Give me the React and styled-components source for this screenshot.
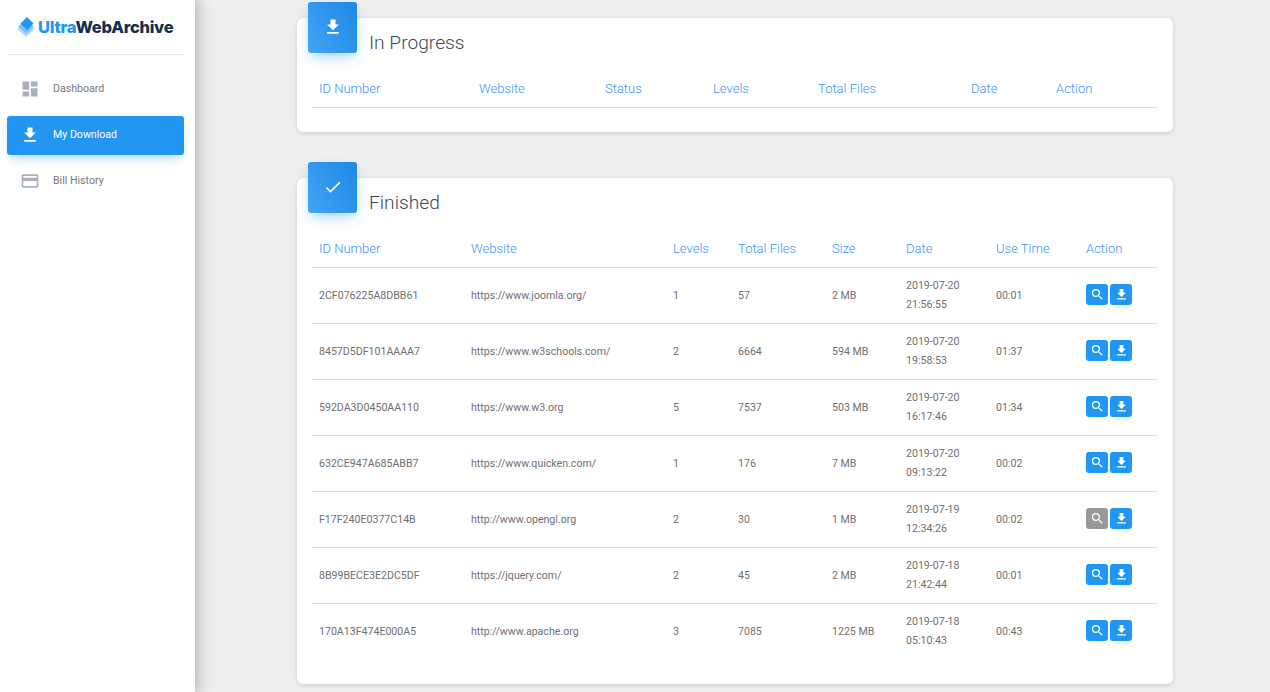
import React from 'react';
import styled, { createGlobalStyle } from 'styled-components';
import { MdDashboard, MdFileDownload, MdCreditCard, MdCheck, MdSearch } from 'react-icons/md';

const GlobalStyle = createGlobalStyle`
  html, body {
    margin: 0;
    height: 100%;
    overflow: hidden;
    background: #eeeeee;
    font-family: Roboto, "Liberation Sans", sans-serif;
  }
`;

const Page = styled.div`
  display: flex;
  height: 692px;
  overflow: hidden;
`;

const Sidebar = styled.aside`
  flex: 0 0 195px;
  height: 100%;
  background: #fff;
  box-shadow: 0 0 14px 2px rgba(0, 0, 0, 0.28);
  padding: 0 11px 0 7px;
  box-sizing: border-box;
  z-index: 2;
`;

const Brand = styled.div`
  display: flex;
  align-items: center;
  gap: 3px;
  height: 54px;
  padding: 0 0 0 10px;
  border-bottom: 1px solid #e8e8e8;
`;

const BrandText = styled.span`
  font-family: Inter, "Liberation Sans", sans-serif;
  font-weight: 800;
  font-size: 16.5px;
  letter-spacing: -0.25px;
  color: #10304f;
  white-space: nowrap;
`;

const BrandAccent = styled.span`
  color: #2196f3;
`;

const Nav = styled.nav`
  display: flex;
  flex-direction: column;
  gap: 7px;
  margin-top: 15px;
`;

const NavItem = styled.a`
  display: flex;
  align-items: center;
  height: 39px;
  padding: 0 0 2px 13px;
  box-sizing: border-box;
  gap: 13px;
  border-radius: 3px;
  font-size: 10.6px;
  font-weight: 400;
  color: ${(p) => (p.$active ? '#fff' : '#777')};
  background: ${(p) => (p.$active ? '#2196f3' : 'transparent')};
  box-shadow: ${(p) => (p.$active ? '0 6px 12px -4px rgba(33, 150, 243, 0.45)' : 'none')};

  svg {
    width: 20px;
    height: 20px;
    color: ${(p) => (p.$active ? '#fff' : '#a9afbb')};
    flex: none;
  }
`;

const Main = styled.main`
  flex: 1;
  padding: 18px 97px 0 102px;
  display: flex;
  flex-direction: column;
  gap: 46px;
  min-width: 0;
`;

const Card = styled.section`
  background: #fff;
  border-radius: 6px;
  box-shadow: 0 1px 4px rgba(0, 0, 0, 0.14);
  padding: 0 16px 0 15px;
  height: ${(p) => p.$height}px;
  box-sizing: border-box;
`;

const CardHeader = styled.header`
  display: flex;
  height: 48px;
`;

const IconBox = styled.div`
  width: 49px;
  height: 51px;
  padding-bottom: 2px;
  box-sizing: border-box;
  margin: -16px 0 0 -4px;
  border-radius: 3px;
  background: linear-gradient(60deg, #42a5f5, #1e88e5);
  box-shadow: 0 6px 14px -3px rgba(33, 150, 243, 0.45);
  display: flex;
  align-items: center;
  justify-content: center;
  color: #fff;
  flex: none;

  svg {
    width: 20px;
    height: 20px;
  }
`;

const CardTitle = styled.h2`
  margin: 13px 0 0 12px;
  font-size: 19.2px;
  line-height: 24px;
  font-weight: 300;
  color: #3c4858;
`;

const Table = styled.table`
  width: 845px;
  table-layout: fixed;
  border-collapse: collapse;
`;

const HeadCell = styled.th`
  height: 41px;
  padding: 4px 0 0 7px;
  text-align: left;
  font-size: 13px;
  font-weight: 300;
  color: #3a94f4;
  border-bottom: 1px solid #ddd;
  box-sizing: border-box;
`;

const Row = styled.tr`
  border-bottom: 1px solid #ddd;

  &:last-child {
    border-bottom: none;
  }
`;

const Cell = styled.td`
  height: 56px;
  padding: 0 0 0 7px;
  font-size: 10.6px;
  font-weight: 400;
  line-height: 19px;
  color: #6f6f6f;
  box-sizing: border-box;
`;

const Actions = styled.div`
  display: flex;
  gap: 2px;
  margin-bottom: 1px;
`;

const ActionButton = styled.button`
  width: 22px;
  height: 21px;
  padding: 0;
  border: none;
  border-radius: 3px;
  background: ${(p) => (p.$disabled ? '#999999' : '#2196f3')};
  color: #fff;
  display: flex;
  align-items: center;
  justify-content: center;

  svg {
    width: 15px;
    height: 15px;
  }
`;

const progressColumns = [
  ['ID Number', 160],
  ['Website', 126],
  ['Status', 108],
  ['Levels', 105],
  ['Total Files', 153],
  ['Date', 85],
  ['Action', 108],
];

const finishedColumns = [
  ['ID Number', 152],
  ['Website', 202],
  ['Levels', 65],
  ['Total Files', 94],
  ['Size', 74],
  ['Date', 90],
  ['Use Time', 90],
  ['Action', 78],
];

const downloads = [
  { id: '2CF076225A8DBB61', site: 'https://www.joomla.org/', levels: 1, files: 57, size: '2 MB', day: '2019-07-20', time: '21:56:55', use: '00:01' },
  { id: '8457D5DF101AAAA7', site: 'https://www.w3schools.com/', levels: 2, files: 6664, size: '594 MB', day: '2019-07-20', time: '19:58:53', use: '01:37' },
  { id: '592DA3D0450AA110', site: 'https://www.w3.org', levels: 5, files: 7537, size: '503 MB', day: '2019-07-20', time: '16:17:46', use: '01:34' },
  { id: '632CE947A685ABB7', site: 'https://www.quicken.com/', levels: 1, files: 176, size: '7 MB', day: '2019-07-20', time: '09:13:22', use: '00:02' },
  { id: 'F17F240E0377C14B', site: 'http://www.opengl.org', levels: 2, files: 30, size: '1 MB', day: '2019-07-19', time: '12:34:26', use: '00:02', disabled: true },
  { id: '8B99BECE3E2DC5DF', site: 'https://jquery.com/', levels: 2, files: 45, size: '2 MB', day: '2019-07-18', time: '21:42:44', use: '00:01' },
  { id: '170A13F474E000A5', site: 'http://www.apache.org', levels: 3, files: 7085, size: '1225 MB', day: '2019-07-18', time: '05:10:43', use: '00:43' },
];

const TableHead = ({ columns }) => (
  <>
    <colgroup>
      {columns.map(([label, width]) => (
        <col key={label} width={width} />
      ))}
    </colgroup>
    <thead>
      <tr>
        {columns.map(([label]) => (
          <HeadCell key={label}>{label}</HeadCell>
        ))}
      </tr>
    </thead>
  </>
);

const App = () => (
  <Page>
    <GlobalStyle />
    <Sidebar>
      <Brand>
        <svg width="18" height="20" viewBox="0 0 18 20">
          <path d="M9 5 L18 12 L9 20 L0 12 Z" fill="#b5dcfa" />
          <path d="M9 3 L17 9.5 L9 17 L1 9.5 Z" fill="#7cc0f7" />
          <path d="M10 0 L16.5 6.5 L10 13 L3.5 6.5 Z" fill="#2196f3" />
        </svg>
        <BrandText>
          <BrandAccent>Ultra</BrandAccent>WebArchive
        </BrandText>
      </Brand>
      <Nav>
        <NavItem>
          <MdDashboard />
          Dashboard
        </NavItem>
        <NavItem $active>
          <MdFileDownload />
          My Download
        </NavItem>
        <NavItem>
          <MdCreditCard />
          Bill History
        </NavItem>
      </Nav>
    </Sidebar>
    <Main>
      <Card $height={114}>
        <CardHeader>
          <IconBox>
            <MdFileDownload />
          </IconBox>
          <CardTitle>In Progress</CardTitle>
        </CardHeader>
        <Table>
          <TableHead columns={progressColumns} />
        </Table>
      </Card>
      <Card $height={506}>
        <CardHeader>
          <IconBox>
            <MdCheck />
          </IconBox>
          <CardTitle>Finished</CardTitle>
        </CardHeader>
        <Table>
          <TableHead columns={finishedColumns} />
          <tbody>
            {downloads.map((item) => (
              <Row key={item.id}>
                <Cell>{item.id}</Cell>
                <Cell>{item.site}</Cell>
                <Cell>{item.levels}</Cell>
                <Cell>{item.files}</Cell>
                <Cell>{item.size}</Cell>
                <Cell>
                  {item.day}
                  <br />
                  {item.time}
                </Cell>
                <Cell>{item.use}</Cell>
                <Cell>
                  <Actions>
                    <ActionButton $disabled={item.disabled}>
                      <MdSearch />
                    </ActionButton>
                    <ActionButton>
                      <MdFileDownload />
                    </ActionButton>
                  </Actions>
                </Cell>
              </Row>
            ))}
          </tbody>
        </Table>
      </Card>
    </Main>
  </Page>
);

export default App;
